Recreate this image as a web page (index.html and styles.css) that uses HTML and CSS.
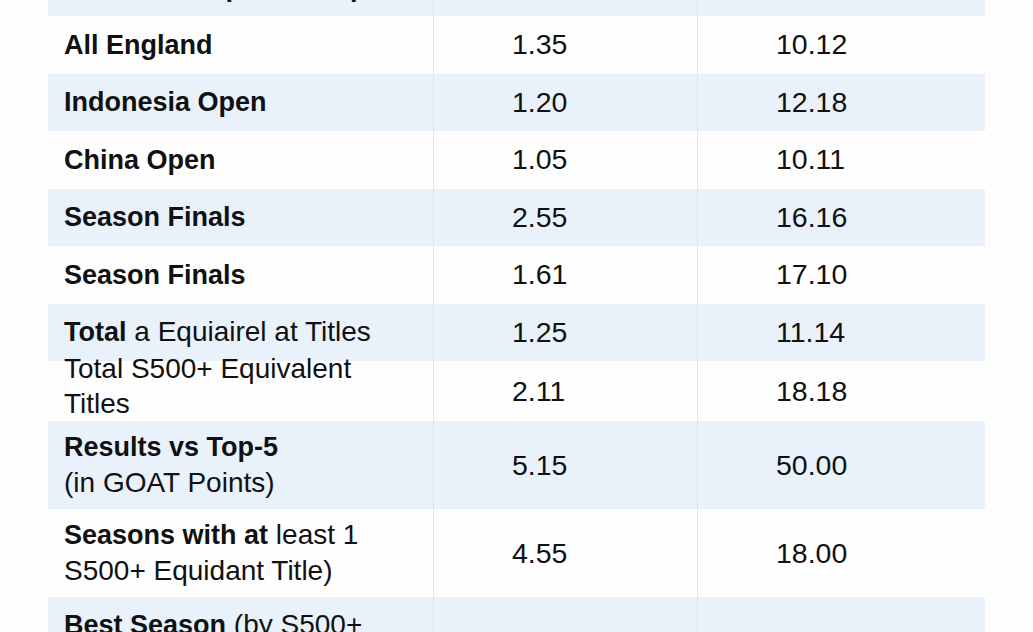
FILE: index.html
```html
<!DOCTYPE html>
<html lang="en">
<head>
<meta charset="utf-8">
<title>S500+ Comparison</title>
<link rel="stylesheet" href="styles.css">
</head>
<body>
<div class="table">
  <div class="row blue">
    <div class="cell label"><span class="strong">Tournament per Champion</span></div>
    <div class="cell num"></div>
    <div class="cell num"></div>
  </div>
  <div class="row">
    <div class="cell label"><span class="strong">All England</span></div>
    <div class="cell num">1.35</div>
    <div class="cell num">10.12</div>
  </div>
  <div class="row blue">
    <div class="cell label"><span class="strong">Indonesia Open</span></div>
    <div class="cell num">1.20</div>
    <div class="cell num">12.18</div>
  </div>
  <div class="row">
    <div class="cell label"><span class="strong">China Open</span></div>
    <div class="cell num">1.05</div>
    <div class="cell num">10.11</div>
  </div>
  <div class="row blue">
    <div class="cell label"><span class="strong">Season Finals</span></div>
    <div class="cell num">2.55</div>
    <div class="cell num">16.16</div>
  </div>
  <div class="row">
    <div class="cell label"><span class="strong">Season Finals</span></div>
    <div class="cell num">1.61</div>
    <div class="cell num">17.10</div>
  </div>
  <div class="row blue">
    <div class="cell label"><span><span class="strong">Total</span> a Equiairel at Titles</span></div>
    <div class="cell num">1.25</div>
    <div class="cell num">11.14</div>
  </div>
  <div class="row mid">
    <div class="cell label"><span class="lift">Total S500+ Equivalent<br>Titles</span></div>
    <div class="cell num">2.11</div>
    <div class="cell num">18.18</div>
  </div>
  <div class="row blue tall">
    <div class="cell label"><span><span class="strong">Results vs Top-5</span><br>(in GOAT Points)</span></div>
    <div class="cell num">5.15</div>
    <div class="cell num">50.00</div>
  </div>
  <div class="row tall">
    <div class="cell label"><span><span class="strong">Seasons with at</span> least 1<br>S500+ Equidant Title)</span></div>
    <div class="cell num">4.55</div>
    <div class="cell num">18.00</div>
  </div>
  <div class="row blue tall">
    <div class="cell label top"><span><span class="strong">Best Season</span> (by S500+<br>Equivalent Titles)</span></div>
    <div class="cell num"></div>
    <div class="cell num"></div>
  </div>
</div>
</body>
</html>
```

FILE: styles.css
```css
html, body {
  margin: 0;
  padding: 0;
  background: #fdfdfd;
}

body {
  font-family: "Liberation Sans", Arial, sans-serif;
  color: #111;
  overflow: hidden;
}

.table {
  width: 937px;
  margin: -41.5px 0 0 48px;
}

.row {
  display: grid;
  grid-template-columns: 385px 264px 288px;
  height: 57.5px;
  background: #fefefe;
}

.row.blue {
  background: #e9f2fa;
}

.row.mid {
  height: 60px;
}

.row.tall {
  height: 88px;
}

.cell {
  display: flex;
  align-items: center;
  height: 100%;
  min-width: 0;
}

.label {
  padding-left: 16px;
  font-size: 28px;
  line-height: 36px;
  white-space: nowrap;
}

.label.top {
  align-items: flex-start;
  padding-top: 10px;
  box-sizing: border-box;
}

.lift {
  margin-top: -10px;
  line-height: 35px;
}

.strong {
  font-weight: bold;
  font-size: 27px;
}

.num {
  border-left: 1px solid #dde5ec;
  padding-left: 78px;
  font-size: 28.5px;
}
```
